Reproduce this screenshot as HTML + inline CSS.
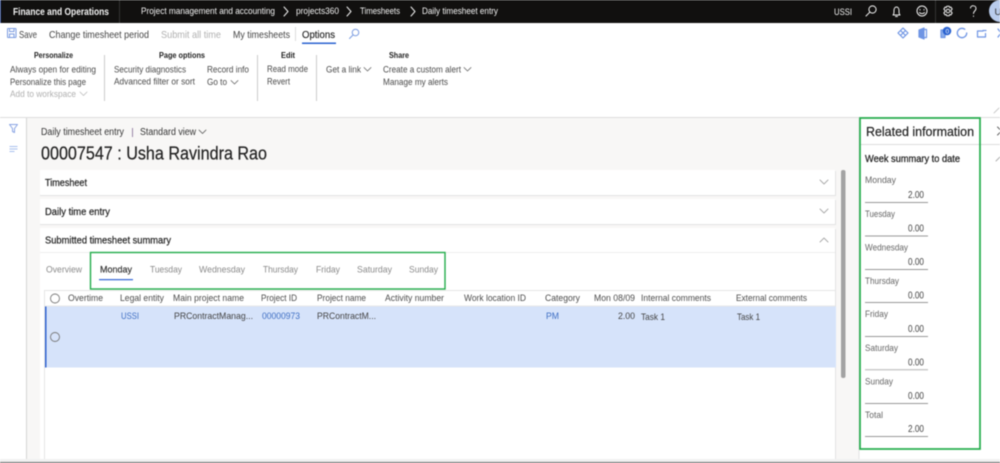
<!DOCTYPE html>
<html><head><meta charset="utf-8"><style>
html,body{margin:0;padding:0;width:1000px;height:463px;overflow:hidden;background:#fff}
svg{display:block;filter:blur(.4px)}
text{font-family:"Liberation Sans",sans-serif;font-size:9.2px;fill:#444;white-space:pre}
.w{fill:#f4f4f4;font-size:9.2px}.r{fill:#4a4a4a;font-size:9px}.b{font-weight:bold;fill:#222;font-size:8.6px}.t{font-size:10.3px;fill:#444}
.g{fill:#777;font-size:9.6px}.h{fill:#4c4c4c;font-size:9px}.l{fill:#3f6fc4}.c{font-size:9.8px;fill:#333}
.m{stroke:#222;stroke-width:.2px}
.s{fill:none;stroke-linecap:round;stroke-linejoin:round}
</style></head><body>
<svg width="1000" height="463" viewBox="0 0 1000 463" xmlns="http://www.w3.org/2000/svg">
<!-- top bar -->
<rect width="1000" height="23" fill="#11100f"/>
<rect width="1" height="23" fill="#24408a"/>
<rect x="119" width="1" height="23" fill="#333"/>
<rect x="935" width="1" height="23" fill="#333"/>
<text x="13" y="15" class="w" style="font-size:10px;font-weight:bold" textLength="96" lengthAdjust="spacingAndGlyphs">Finance and Operations</text>
<text x="141" y="14" class="w" textLength="134" lengthAdjust="spacingAndGlyphs">Project management and accounting</text>
<text x="296" y="14" class="w" textLength="43" lengthAdjust="spacingAndGlyphs">projects360</text>
<text x="360" y="14" class="w" textLength="40" lengthAdjust="spacingAndGlyphs">Timesheets</text>
<text x="422" y="14" class="w" textLength="76" lengthAdjust="spacingAndGlyphs">Daily timesheet entry</text>
<g class="s" stroke="#eee" stroke-width="1"><path d="M284 7l4 4.5-4 4.500M347 7l4 4.500-4 4.500M411 7l4 4.500-4 4.500"/></g>
<text x="834" y="15" class="w" textLength="18" lengthAdjust="spacingAndGlyphs">USSI</text>
<g class="s" stroke="#f2f2f2" stroke-width="1">
<circle cx="872.500" cy="9.500" r="3.600"/><path d="M869.800 12.200l-3.800 3.800"/>
<path d="M893 15c1.200-1 1-2.500 1-4.500 0-2 1-3.500 2.500-3.500s2.500 1.500 2.500 3.500c0 2-.2 3.500 1 4.500z"/><path d="M895.500 16.500h2"/>
<circle cx="922" cy="11" r="5"/><path d="M919.500 12.500c1 1.500 4 1.500 5 0"/><path d="M920 9.500v.5M924 9.500v.5"/>
<circle cx="948" cy="11" r="1.800"/><path d="M946.800 6.200h2.400l.5 1.300 1.300-.4 1.200 2-1 .9v2l1 .9-1.200 2-1.300-.4-.5 1.300h-2.400l-.5-1.300-1.300.4-1.200-2 1-.9v-2l-1-.9 1.200-2 1.300.4z"/>
<path d="M970.500 8c.3-3 5.500-3 5.500 .5 0 2.500-2.500 2.500-2.500 5M973.500 16v.4"/>
</g>
<circle cx="1000" cy="11" r="11" fill="#b9ccec"/>
<text x="994.500" y="15" style="font-size:9.500px;fill:#333">U</text>
<!-- toolbar -->
<g class="s" stroke="#7a9be0" stroke-width="1"><rect x="7.500" y="28.500" width="8.500" height="9" rx=".5"/><path d="M9.500 28.500v3h4.500v-3M9.500 37.500v-3.500h4.500v3.500"/></g>
<text x="19" y="38" class="t" textLength="18" lengthAdjust="spacingAndGlyphs">Save</text>
<text x="49" y="38" class="t" textLength="100" lengthAdjust="spacingAndGlyphs">Change timesheet period</text>
<text x="161" y="38" class="t" style="fill:#b0b0b0" textLength="60" lengthAdjust="spacingAndGlyphs">Submit all time</text>
<text x="233" y="38" class="t" textLength="57" lengthAdjust="spacingAndGlyphs">My timesheets</text>
<rect x="295" y="27" width="1" height="14" fill="#ddd"/>
<text x="302" y="38" class="t" style="fill:#222;stroke:#222;stroke-width:.15px" textLength="33" lengthAdjust="spacingAndGlyphs">Options</text>
<rect x="302" y="42.500" width="34" height="1.500" fill="#2a62d0"/>
<g class="s" stroke="#7a9be0" stroke-width="1"><circle cx="355.500" cy="32.500" r="3.300"/><path d="M353 35l-3.500 3.500"/></g>
<!-- toolbar right icons -->
<g class="s" stroke="#6f95e4" stroke-width="1.200">
<path d="M903 28l5 5-5 5-5-5zM900.500 30.500l5 5M905.500 30.500l-5 5"/>
<path d="M919 30l5-2v11l-5-2z" fill="#6f95e4"/><path d="M924 29.500h2.500v8h-2.500"/>
<path d="M941 30h4v7.500h-4z" fill="#8caeea"/>
<circle cx="962" cy="33" r="4.700" stroke-dasharray="25 5" stroke-width="1.300"/>
<path d="M983 31h-5.500v6h8v-3.500M983 30.500h3"/>
<path d="M998 29l6 8M1004 29l-6 8"/>
</g>
<circle cx="947" cy="31" r="4.300" fill="#2a62d0"/>
<text x="945.500" y="33.500" style="font-size:6.500px;fill:#fff">0</text>
<!-- ribbon -->
<text x="34" y="58" class="b" textLength="39" lengthAdjust="spacingAndGlyphs">Personalize</text>
<text x="159" y="58" class="b" textLength="46" lengthAdjust="spacingAndGlyphs">Page options</text>
<text x="281" y="58" class="b" textLength="14" lengthAdjust="spacingAndGlyphs">Edit</text>
<text x="389" y="58" class="b" textLength="20" lengthAdjust="spacingAndGlyphs">Share</text>
<rect x="104" y="55" width="1" height="46" fill="#ccc"/><rect x="257" y="55" width="1" height="46" fill="#ccc"/><rect x="316" y="55" width="1" height="46" fill="#ccc"/>
<text x="10" y="72.500" class="r" textLength="86" lengthAdjust="spacingAndGlyphs">Always open for editing</text>
<text x="10" y="85" class="r" textLength="76" lengthAdjust="spacingAndGlyphs">Personalize this page</text>
<text x="10" y="97" class="r" style="fill:#b0b0b0" textLength="66" lengthAdjust="spacingAndGlyphs">Add to workspace</text>
<text x="114" y="72.500" class="r" textLength="72" lengthAdjust="spacingAndGlyphs">Security diagnostics</text>
<text x="114" y="84.500" class="r" textLength="81" lengthAdjust="spacingAndGlyphs">Advanced filter or sort</text>
<text x="207" y="72.500" class="r" textLength="42" lengthAdjust="spacingAndGlyphs">Record info</text>
<text x="207" y="85" class="r" textLength="20" lengthAdjust="spacingAndGlyphs">Go to</text>
<text x="267" y="72" class="r" textLength="41" lengthAdjust="spacingAndGlyphs">Read mode</text>
<text x="267" y="84.500" class="r" textLength="23" lengthAdjust="spacingAndGlyphs">Revert</text>
<text x="326" y="72.500" class="r" textLength="35" lengthAdjust="spacingAndGlyphs">Get a link</text>
<text x="383" y="72.500" class="r" textLength="78" lengthAdjust="spacingAndGlyphs">Create a custom alert</text>
<text x="383" y="85" class="r" textLength="65" lengthAdjust="spacingAndGlyphs">Manage my alerts</text>
<g class="s" stroke="#666" stroke-width=".8"><path d="M231 80.500l3.500 3.500 3.500-3.500M364 67.500l3.500 3.500 3.500-3.500M464 67.500l3.500 3.500 3.500-3.500"/><path stroke="#bbb" d="M80 92l3.500 3.500 3.500-3.500"/></g>
<path class="s" stroke="#bbb" stroke-width=".8" d="M994 113l5-5"/>
<rect y="117" width="1000" height="1" fill="#ddd"/>
<!-- left rail + canvas -->
<rect y="118" width="26" height="341" fill="#fff"/>
<rect x="26" y="118" width="1" height="341" fill="#d5d5d5"/>
<rect x="27" y="118" width="832" height="341" fill="#f8f7f6"/>
<path class="s" stroke="#8aa5e4" stroke-width="1" d="M9.500 124.500h8l-3 4v4l-2-1v-3z"/>
<g fill="#a8bfee"><rect x="9.500" y="146" width="8" height="1"/><rect x="9.500" y="148.500" width="8" height="1"/><rect x="9.500" y="151" width="5" height="1"/></g>
<text x="41" y="135" class="c" textLength="83" lengthAdjust="spacingAndGlyphs">Daily timesheet entry</text>
<rect x="132" y="128" width="1" height="9" fill="#9a86a8"/>
<text x="140" y="135" class="c" textLength="56" lengthAdjust="spacingAndGlyphs">Standard view</text>
<path class="s" stroke="#555" stroke-width=".8" d="M199 130l3.500 3.500 3.500-3.500"/>
<text x="41" y="159.500" style="font-size:18px;fill:#222;stroke:#222;stroke-width:.2px" textLength="226" lengthAdjust="spacingAndGlyphs">00007547 : Usha Ravindra Rao</text>
<!-- cards -->
<g fill="#e3e3e3"><rect x="40" y="171" width="796" height="25"/><rect x="40" y="200" width="796" height="25"/><rect x="40" y="229" width="796" height="230"/></g>
<g fill="#fff"><rect x="40" y="170" width="795" height="25"/><rect x="40" y="199" width="795" height="25"/><rect x="40" y="228" width="795" height="231"/></g>
<text x="45" y="186" class="c m" style="fill:#222" textLength="42" lengthAdjust="spacingAndGlyphs">Timesheet</text>
<text x="45" y="215" class="c m" style="fill:#222" textLength="65" lengthAdjust="spacingAndGlyphs">Daily time entry</text>
<text x="45" y="243.500" class="c m" style="fill:#222" textLength="126" lengthAdjust="spacingAndGlyphs">Submitted timesheet summary</text>
<g class="s" stroke="#aaa" stroke-width=".9"><path d="M820 180l4 4 4-4M820 209l4 4 4-4M820 242l4-4 4 4"/></g>
<rect x="40" y="252" width="795" height="1" fill="#eee"/>
<!-- tabs -->
<text x="46" y="272.500" class="g" style="fill:#8a8a8a" textLength="36" lengthAdjust="spacingAndGlyphs">Overview</text>
<text x="100" y="272.500" class="g m" style="fill:#333;stroke:#333" textLength="32" lengthAdjust="spacingAndGlyphs">Monday</text>
<text x="150" y="272.500" class="g" style="fill:#8a8a8a" textLength="32" lengthAdjust="spacingAndGlyphs">Tuesday</text>
<text x="199" y="272.500" class="g" style="fill:#8a8a8a" textLength="46" lengthAdjust="spacingAndGlyphs">Wednesday</text>
<text x="263" y="272.500" class="g" style="fill:#8a8a8a" textLength="35" lengthAdjust="spacingAndGlyphs">Thursday</text>
<text x="316" y="272.500" class="g" style="fill:#8a8a8a" textLength="24" lengthAdjust="spacingAndGlyphs">Friday</text>
<text x="357" y="272.500" class="g" style="fill:#8a8a8a" textLength="35" lengthAdjust="spacingAndGlyphs">Saturday</text>
<text x="409" y="272.500" class="g" style="fill:#8a8a8a" textLength="29" lengthAdjust="spacingAndGlyphs">Sunday</text>
<rect x="99" y="279" width="34" height="1.300" fill="#3f6fd8"/>
<!-- grid -->
<rect x="44" y="290" width="791" height="1" fill="#e6e6e6"/>
<rect x="44" y="305.500" width="791" height="1" fill="#e8e8e8"/>
<rect x="44" y="290" width="1" height="169" fill="#e6e6e6"/>
<rect x="45" y="306.500" width="791" height="61" fill="#d6e3fa"/>
<rect x="45" y="306.500" width="1.500" height="61" fill="#2f62d0"/>
<circle cx="55" cy="298.500" r="4.500" fill="none" stroke="#777" stroke-width=".9"/>
<circle cx="55" cy="337" r="4.500" fill="none" stroke="#777" stroke-width=".9"/>
<text x="68" y="301" class="h" textLength="35" lengthAdjust="spacingAndGlyphs">Overtime</text>
<text x="120" y="301" class="h" textLength="44" lengthAdjust="spacingAndGlyphs">Legal entity</text>
<text x="173" y="301" class="h" textLength="71" lengthAdjust="spacingAndGlyphs">Main project name</text>
<text x="261" y="301" class="h" textLength="36" lengthAdjust="spacingAndGlyphs">Project ID</text>
<text x="317" y="301" class="h" textLength="49" lengthAdjust="spacingAndGlyphs">Project name</text>
<text x="385" y="301" class="h" textLength="59" lengthAdjust="spacingAndGlyphs">Activity number</text>
<text x="464" y="301" class="h" textLength="62" lengthAdjust="spacingAndGlyphs">Work location ID</text>
<text x="545" y="301" class="h" textLength="35" lengthAdjust="spacingAndGlyphs">Category</text>
<text x="594" y="301" class="h" textLength="41" lengthAdjust="spacingAndGlyphs">Mon 08/09</text>
<text x="641" y="301" class="h" textLength="70" lengthAdjust="spacingAndGlyphs">Internal comments</text>
<text x="736" y="301" class="h" textLength="71" lengthAdjust="spacingAndGlyphs">External comments</text>
<text x="121" y="319" class="l" textLength="18" lengthAdjust="spacingAndGlyphs">USSI</text>
<text x="174" y="319" textLength="79" lengthAdjust="spacingAndGlyphs">PRContractManag...</text>
<text x="262" y="319" class="l" textLength="38" lengthAdjust="spacingAndGlyphs">00000973</text>
<text x="317" y="319" textLength="59" lengthAdjust="spacingAndGlyphs">PRContractM...</text>
<text x="546" y="319" class="l" textLength="13" lengthAdjust="spacingAndGlyphs">PM</text>
<text x="618" y="319" textLength="17" lengthAdjust="spacingAndGlyphs">2.00</text>
<text x="641" y="320" textLength="24" lengthAdjust="spacingAndGlyphs">Task 1</text>
<text x="737" y="320" textLength="23" lengthAdjust="spacingAndGlyphs">Task 1</text>
<rect x="841" y="170" width="4.500" height="208" rx="2" fill="#a3a3a3"/>
<!-- right panel -->
<rect x="859" y="118" width="141" height="341" fill="#fff"/>
<rect x="858.500" y="118" width="1" height="341" fill="#e3e3e3"/>
<rect x="860" y="144" width="140" height="1" fill="#ddd"/>
<text x="866" y="136" style="font-size:13px;fill:#222;stroke:#222;stroke-width:.2px" textLength="108" lengthAdjust="spacingAndGlyphs">Related information</text>
<path class="s" stroke="#555" stroke-width=".9" d="M997.500 127l4 4-4 4"/>
<path class="s" stroke="#aaa" stroke-width=".9" d="M996 161l4-4"/>
<text x="865" y="162" style="font-size:9.800px;fill:#222;stroke:#222;stroke-width:.25px" textLength="95" lengthAdjust="spacingAndGlyphs">Week summary to date</text>
<g>
<text x="865" y="183" style="font-size:9px;fill:#666" textLength="31" lengthAdjust="spacingAndGlyphs">Monday</text>
<text x="865" y="217" style="font-size:9px;fill:#666" textLength="30" lengthAdjust="spacingAndGlyphs">Tuesday</text>
<text x="865" y="250.500" style="font-size:9px;fill:#666" textLength="43" lengthAdjust="spacingAndGlyphs">Wednesday</text>
<text x="865" y="284" style="font-size:9px;fill:#666" textLength="34" lengthAdjust="spacingAndGlyphs">Thursday</text>
<text x="865" y="317" style="font-size:9px;fill:#666" textLength="23" lengthAdjust="spacingAndGlyphs">Friday</text>
<text x="865" y="351" style="font-size:9px;fill:#666" textLength="33" lengthAdjust="spacingAndGlyphs">Saturday</text>
<text x="865" y="384.500" style="font-size:9px;fill:#666" textLength="28" lengthAdjust="spacingAndGlyphs">Sunday</text>
<text x="865" y="418" style="font-size:9px;fill:#666" textLength="18" lengthAdjust="spacingAndGlyphs">Total</text>
</g>
<g>
<text x="908" y="198" style="font-size:9.800px" textLength="16" lengthAdjust="spacingAndGlyphs">2.00</text>
<text x="908" y="231.500" style="font-size:9.800px" textLength="16" lengthAdjust="spacingAndGlyphs">0.00</text>
<text x="908" y="265" style="font-size:9.800px" textLength="16" lengthAdjust="spacingAndGlyphs">0.00</text>
<text x="908" y="298.500" style="font-size:9.800px" textLength="16" lengthAdjust="spacingAndGlyphs">0.00</text>
<text x="908" y="332" style="font-size:9.800px" textLength="16" lengthAdjust="spacingAndGlyphs">0.00</text>
<text x="908" y="365.500" style="font-size:9.800px" textLength="16" lengthAdjust="spacingAndGlyphs">0.00</text>
<text x="908" y="399" style="font-size:9.800px" textLength="16" lengthAdjust="spacingAndGlyphs">0.00</text>
<text x="908" y="432" style="font-size:9.800px" textLength="16" lengthAdjust="spacingAndGlyphs">2.00</text>
</g>
<g fill="#999"><rect x="865" y="202" width="63" height="1"/><rect x="865" y="235.500" width="63" height="1"/><rect x="865" y="269" width="63" height="1"/><rect x="865" y="302" width="63" height="1"/><rect x="865" y="336" width="63" height="1"/><rect x="865" y="369" width="63" height="1.500" fill="#ccc"/><rect x="865" y="403" width="63" height="1"/><rect x="865" y="436" width="63" height="1"/></g>
<!-- green highlights -->
<rect x="90.500" y="252.500" width="354.500" height="36.500" fill="none" stroke="#22ac4a" stroke-width="1.400"/>
<rect x="860" y="118" width="120" height="331" fill="none" stroke="#22ac4a" stroke-width="1.700"/>
<!-- bottom -->
<rect y="459" width="1000" height="3" fill="#f1f1f1"/>
<rect y="462" width="1000" height="1" fill="#666"/>
</svg>
</body></html>
